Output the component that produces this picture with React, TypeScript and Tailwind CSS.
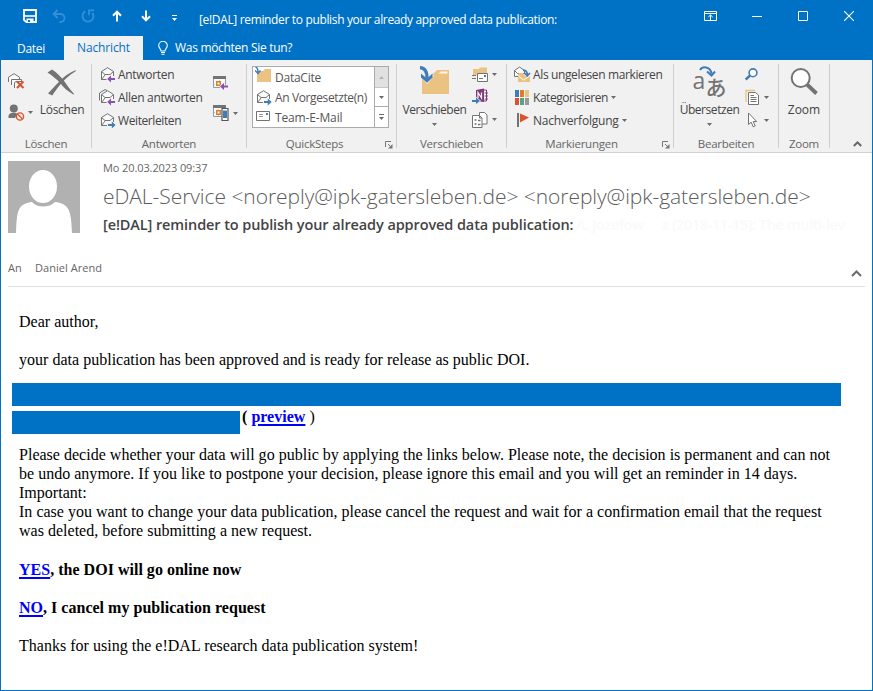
import type { ReactNode } from "react";

const GRAY = "#737373";
const BLUE = "#3f7cba";
const PURPLE = "#8a50ab";
const ORANGE = "#e07c2c";
const RED = "#d9532f";
const TAN = "#eac282";

function Svg({ w, h, children, className = "" }: { w: number; h: number; children: ReactNode; className?: string }) {
  return (
    <svg width={w} height={h} viewBox={`0 0 ${w} ${h}`} fill="none" className={`block shrink-0 ${className}`}>
      {children}
    </svg>
  );
}

function Caret({ className = "", color = "#6b6b6b" }: { className?: string; color?: string }) {
  return (
    <Svg w={5} h={3} className={className}>
      <path d="M0 0h5L2.5 3z" fill={color} />
    </Svg>
  );
}

function Envelope({ stacked = false }: { stacked?: boolean }) {
  return (
    <>
      {stacked && <path d="M.5 11.5V4L6 .6l2 .9" stroke={GRAY} />}
      <path d="M2.5 13.500V5.500L8.500 1.700l6 3.800V10" fill="#fafafa" stroke={GRAY} />
      <path d="M2.500 5.500 6 8.500h5l3.500-3M2.500 13.500 6 9M2.500 13.500H8" stroke={GRAY} />
    </>
  );
}

function ReplyIcon({ all = false }: { all?: boolean }) {
  return (
    <Svg w={17} h={17}>
      <Envelope stacked={all} />
      <path d="M8.200 13 12 9.600V12h4v2h-4v2.400z" fill={PURPLE} stroke="#f1f1f1" strokeWidth="1.600" paintOrder="stroke" />
    </Svg>
  );
}

function ForwardIcon() {
  return (
    <Svg w={17} h={17}>
      <Envelope />
      <path d="M16.600 13 12.800 9.600V12H9v2h3.800v2.400z" fill={BLUE} stroke="#f6f6f6" strokeWidth="1.600" paintOrder="stroke" />
    </Svg>
  );
}

function GroupLauncher({ className = "" }: { className?: string }) {
  return (
    <Svg w={8} h={8} className={className}>
      <path d="M.5 6V.5H6M3 3l3 3" stroke="#777" />
      <path d="M7.500 3v4.500H3z" fill="#777" />
    </Svg>
  );
}

function Group({ width, label, labelClass = "", launcher = false, children }: { width: string; label: string; labelClass?: string; launcher?: boolean; children: ReactNode }) {
  return (
    <div className={`flex h-[84px] shrink-0 flex-col border-r border-[#cfcfcf] ${width}`}>
      <div className="flex h-[70px] shrink-0 items-start">{children}</div>
      <div className="flex h-5 shrink-0 items-center">
        <span className={`flex-1 whitespace-nowrap text-center text-[11.5px] leading-[18px] tracking-[-0.25px] text-[#666] ${labelClass}`}>{label}</span>
        {launcher && <GroupLauncher className="-ml-[11px] mr-[3px] mt-[2px]" />}
      </div>
    </div>
  );
}

function Row({ icon, text, caret = false, tracking }: { icon: ReactNode; text: string; caret?: boolean; tracking: string }) {
  return (
    <div className="flex h-[23px] items-center">
      {icon}
      <span className={`ml-[2px] whitespace-nowrap text-[12px] leading-[18px] text-[#444] ${tracking}`}>{text}</span>
      {caret && <Caret className="ml-[3px]" />}
    </div>
  );
}

function BigLabel({ children, className = "" }: { children: ReactNode; className?: string }) {
  return <span className={`whitespace-nowrap text-[12px] leading-[18px] text-[#444] ${className}`}>{children}</span>;
}

function TitleBar() {
  return (
    <div className="flex h-9 items-start text-white">
      <div className="flex h-8 items-center pl-[22px]">
        <Svg w={14} h={14}>
          <path d="M1 1h12v12H3.500L1 11z" stroke="#fff" strokeWidth="1.800" />
          <path d="M1 7h12" stroke="#fff" strokeWidth="1.600" />
          <path d="M3.500 9.500h7V13h-7z" fill="#fff" />
          <path d="M5 11h2v2H5z" fill="#0072c6" />
        </Svg>
        <Svg w={15} h={14} className="ml-[15px]">
          <path d="M5.500 1 1.500 5l4 4M1.500 5h7a4 4 0 0 1 0 8H7.500" stroke="#3390d6" strokeWidth="1.800" />
        </Svg>
        <Svg w={14} h={14} className="ml-[14px]">
          <path d="M4.200 2.400A5.500 5.500 0 1 0 11.500 4M8 6.200V1.300h5" stroke="#3390d6" strokeWidth="1.800" />
        </Svg>
        <Svg w={10} h={12} className="ml-[17px]">
          <path d="M5 11.500V2M1 5.800 5 1.600l4 4.200" stroke="#fff" strokeWidth="2" />
        </Svg>
        <Svg w={10} h={12} className="ml-[19px]">
          <path d="M5 .5V10M1 6.200l4 4.200 4-4.200" stroke="#fff" strokeWidth="2" />
        </Svg>
        <Svg w={5} h={6} className="ml-[21px] mt-[3px]">
          <path d="M0 .5h5" stroke="#fff" />
          <path d="M0 3h5L2.500 6z" fill="#fff" />
        </Svg>
      </div>
      <span className="ml-[22px] mt-[11px] whitespace-nowrap text-[12px] leading-[18px] tracking-[-0.345px]">
        [e!DAL] reminder to publish your already approved data publication:
      </span>
      <div className="ml-auto flex h-8 items-center pr-[18px]">
        <Svg w={13} h={10}>
          <path d="M.5.5h12v9H.5zM.5 2.500h12M6.500 9V4M4.300 6l2.200-2 2.200 2" stroke="#fff" />
        </Svg>
        <Svg w={10} h={10} className="ml-[35px]">
          <path d="M0 5.500h10" stroke="#fff" />
        </Svg>
        <Svg w={10} h={10} className="ml-9">
          <path d="M.5.5h9v9h-9z" stroke="#fff" />
        </Svg>
        <Svg w={10} h={10} className="ml-9">
          <path d="m0 0 10 10M10 0 0 10" stroke="#fff" strokeWidth="1.100" />
        </Svg>
      </div>
    </div>
  );
}

function Tabs() {
  return (
    <div className="flex h-6 items-center text-[12px] leading-[18px] text-white">
      <span className="w-[63px] pl-4 pt-[2px] tracking-[-0.3px]">Datei</span>
      <span className="flex h-6 w-[79px] items-center justify-center bg-[#f1f1f1] tracking-[-0.15px] text-[#0072c6]">Nachricht</span>
      <Svg w={10} h={14} className="ml-[15px]">
        <path d="M3 10C3 8 .7 7.200.7 4.600a4.300 4.300 0 0 1 8.600 0C9.300 7.200 7 8 7 10zM3 11.500h4M3.500 13.300h3" stroke="#fff" strokeWidth="1.100" />
      </Svg>
      <span className="ml-[7px] tracking-[-0.3px]">Was möchten Sie tun?</span>
    </div>
  );
}

function QuickStep({ icon, text, className = "" }: { icon: ReactNode; text: string; className?: string }) {
  return (
    <div className="flex h-5 items-center gap-[4px] pl-[2px]">
      {icon}
      <span className={`mt-[2px] whitespace-nowrap text-[12px] leading-5 text-[#555] ${className}`}>{text}</span>
    </div>
  );
}

function Ribbon() {
  return (
    <div className="flex h-[93px] border-b border-[#d0d0d0] bg-[#f1f1f1] pt-1">
      <Group width="w-[91px]" label="Löschen">
        <div className="flex w-[37px] flex-col pl-[7px] pt-[9px]">
          <Svg w={17} h={17}>
            <path d="M.5 9V4.200L6 .7l5.500 3.500V6" fill="#fafafa" stroke={GRAY} />
            <path d="M3.500 12V6.500h10V9M6.500 15V9.500L8 8.500h6" fill="#fafafa" stroke={GRAY} />
            <path d="m9 8.500 6.500 6.500M15.500 8.500 9 15" stroke={RED} strokeWidth="2" />
          </Svg>
          <div className="mt-[14px] flex items-center">
            <Svg w={17} h={17}>
              <circle cx="5.800" cy="4.500" r="4" fill={GRAY} />
              <path d="M.5 14V12c0-2 1.800-3.300 5-3.300 2 0 3 .5 4 1L7 14z" fill={GRAY} />
              <circle cx="12" cy="12.500" r="3.600" fill="#f1f1f1" stroke={RED} strokeWidth="1.400" />
              <path d="m9.500 10 5 5" stroke={RED} strokeWidth="1.300" />
            </Svg>
            <Caret className="ml-[3px]" />
          </div>
        </div>
        <div className="flex w-[48px] flex-col items-center pt-[5px]">
          <Svg w={30} h={27}>
            <path d="M.5 3.500 5 .6c5 3 9 7.500 12.300 11.700 2.800 4 5.300 7.700 9.800 12.700l-.8.5c-6-3.500-9.700-7-13.200-11.500C9.500 10 5 6.500.5 3.500z" fill={GRAY} />
            <path d="M28.500 1.200 29 2C21 6.500 15 13 10.500 19c-2 2.700-3.500 5-5.200 7.400L1 24.500C7 18 11 13.500 16 9c4-3.500 8-6.200 12.500-7.800z" fill={GRAY} />
          </Svg>
          <BigLabel className="mt-[5px] tracking-[-0.25px]">Löschen</BigLabel>
        </div>
      </Group>

      <Group width="w-[155px]" label="Antworten">
        <div className="-mt-px flex w-[119px] flex-col pl-[7px]">
          <Row icon={<ReplyIcon />} text="Antworten" tracking="tracking-[-0.3px]" />
          <Row icon={<ReplyIcon all />} text="Allen antworten" tracking="tracking-[-0.3px]" />
          <Row icon={<ForwardIcon />} text="Weiterleiten" tracking="tracking-[-0.4px]" />
        </div>
        <div className="flex flex-col pl-[2px] pt-3">
          <Svg w={16} h={15}>
            <path d="M.5.5h12v11H.5z" fill="#fafafa" stroke="#999" />
            <path d="M0 0h13v3H0z" fill={GRAY} />
            <path d="M1 8.500h10M6.500 4v7" stroke="#ccc" strokeDasharray="1 1" />
            <path d="M3.750 5.750h3.500v3.500h-3.500z" fill="#fff" stroke={ORANGE} strokeWidth="1.500" />
            <path d="M7 10.500 11 7v2.500h4v2h-4V14z" fill={PURPLE} stroke="#f1f1f1" strokeWidth="1.600" paintOrder="stroke" />
          </Svg>
          <div className="mt-[14px] flex items-center">
            <Svg w={16} h={16}>
              <path d="M.5.5h12v11H.5z" fill="#fafafa" stroke="#999" />
              <path d="M0 0h13v3H0z" fill={GRAY} />
              <path d="M1 7.500h7M5.500 4v7" stroke="#ccc" strokeDasharray="1 1" />
              <path d="M3.750 5.750h3.500v3.500h-3.500z" fill="#fff" stroke={ORANGE} strokeWidth="1.500" />
              <path d="M9 3.500h6v12H9z" fill="#fff" stroke="#555" strokeWidth="1.200" />
              <path d="M10 5.500h4V13h-4z" fill={BLUE} />
            </Svg>
            <Caret className="ml-1" />
          </div>
        </div>
      </Group>

      <Group width="w-[150px]" label="QuickSteps" labelClass="pr-[14px]" launcher>
        <div className="ml-[5px] mt-[2px] flex h-[62px] w-[137px] border border-[#ababab] bg-white">
          <div className="flex-1">
            <QuickStep
              text="DataCite"
              className="tracking-[-0.25px]"
              icon={
                <Svg w={16} h={16} className="-mt-[5px]">
                  <path d="M2 4h6l2-2h6v13H2z" fill={TAN} />
                  <path d="M.5 0c2 .5 2.500 2 2.500 5M0 3.500l3 3 2.500-3" stroke={BLUE} strokeWidth="1.500" />
                </Svg>
              }
            />
            <QuickStep text="An Vorgesetzte(n)" className="-ml-px tracking-[-0.38px]" icon={<ForwardIcon />} />
            <QuickStep
              text="Team-E-Mail"
              className="tracking-[-0.15px]"
              icon={
                <Svg w={15} h={10} className="-mt-[3px] ml-px">
                  <path d="M.5.5h13v9H.5z" fill="#fff" stroke={GRAY} />
                  <path d="M3 3.500h4M3 5.500h4" stroke="#999" />
                  <path d="M10 2h2v2h-2z" fill={BLUE} />
                </Svg>
              }
            />
          </div>
          <div className="flex w-[14px] flex-col border-l border-[#ababab]">
            <div className="flex h-[21px] items-center justify-center border-b border-[#c6c6c6] bg-[#e1e1e1]">
              <Caret className="rotate-180" color="#b5b5b5" />
            </div>
            <div className="flex h-[19px] items-center justify-center border-b border-[#ababab]">
              <Caret />
            </div>
            <div className="flex h-5 flex-col items-center justify-center gap-[2px]">
              <span className="h-px w-[5px] bg-[#6b6b6b]" />
              <Caret />
            </div>
          </div>
        </div>
      </Group>

      <Group width="w-[110px]" label="Verschieben">
        <div className="flex w-[75px] flex-col items-center pt-[2px]">
          <Svg w={31} h={29}>
            <path d="M3 8h11l4-4h12v24H3z" fill={TAN} />
            <path d="M19.500 7.500 22 5.500h6.500v2z" fill="#fff8e8" />
            <path d="M1.500 1.500C7 2 9 5.500 8.200 13M2 8l6 6.200L13 8" stroke="#f1f1f1" strokeWidth="5" />
            <path d="M1 1.700c5.500.3 7.200 4 7 11" stroke={BLUE} strokeWidth="3.200" />
            <path d="M2 7.500v4l6 5.200 5.500-5.200v-4L8 12.500z" fill={BLUE} />
          </Svg>
          <BigLabel className="mt-[5px] translate-y-px tracking-[-0.45px]">Verschieben</BigLabel>
          <Caret className="mt-[5px]" />
        </div>
        <div className="flex flex-col">
          <div className="flex h-[21px] items-center">
            <Svg w={16} h={16}>
              <path d="M1 2h6l1-1.500h7V8H1z" fill={TAN} />
              <path d="M5.500 6.500h10v8h-10z" fill="#fff" stroke={GRAY} />
              <path d="M0 8.500h4M0 11.500h4M7 11.500h4" stroke={GRAY} />
              <path d="M12 8h2v2h-2z" fill={BLUE} />
            </Svg>
            <Caret className="ml-1" />
          </div>
          <Svg w={17} h={16} className="mt-[3px]">
            <path d="M8 2h6.500v11H8z" fill="#fff" stroke="#80397b" />
            <path d="M12.500 5H16M12.500 8H16M12.500 11H16" stroke="#80397b" />
            <path d="m4 2 8-1.500V14l-8-1.500z" fill="#80397b" />
            <path d="M6 10V4.500l3.500 5.500V4.500" stroke="#fff" strokeWidth="1.200" />
            <path d="M0 12h4V9.500L8 13l-4 3v-2H0z" fill={BLUE} stroke="#f1f1f1" strokeWidth="1.400" paintOrder="stroke" />
          </Svg>
          <div className="mt-1 flex h-[23px] items-center">
            <Svg w={16} h={16}>
              <path d="M7.500 3V.5h5l2.500 2.500v9H9" fill="#fff" stroke={GRAY} />
              <path d="M.5 3.500h7L10 6v9.500H.5zM7.500 3.500V6H10" fill="#fff" stroke={GRAY} />
              <path d="M2.500 8h2M2.500 12h2M6 8.500h2.500M6 12.500h2.500" stroke={GRAY} strokeWidth="1.500" />
            </Svg>
            <Caret className="ml-1" />
          </div>
        </div>
      </Group>

      <Group width="w-[167px]" label="Markierungen" labelClass="pr-[17px]" launcher>
        <div className="-mt-px flex flex-col pl-[7px]">
          <Row
            text="Als ungelesen markieren"
            tracking="tracking-[-0.37px]"
            icon={
              <Svg w={17} h={17}>
                <path d="M.5 10.500V4.500L5.500 1l5 3.500v3H6M.5 4.500l3 3H6M.5 10.500H4" fill="#fafafa" stroke={GRAY} />
                <path d="M4 8l1-1h4l2 3h5v6H4z" fill={TAN} />
                <path d="m4.500 10 5 4 6-4" stroke="#fff" />
                <path d="M9 4.500c3-.5 4.300 1 4.300 4.500M10.500 7l2.800 2.800L16 7" stroke={BLUE} strokeWidth="1.700" />
              </Svg>
            }
          />
          <Row
            text="Kategorisieren"
            caret
            tracking="tracking-[-0.45px]"
            icon={
              <Svg w={17} h={17}>
                <path d="M1 1h4v7H1z" fill={BLUE} />
                <path d="M6 1h4v7H6z" fill={ORANGE} />
                <path d="M11 1h4v7h-4z" fill={TAN} />
                <path d="M1 9h4v7H1z" fill={RED} />
                <path d="M6 9h4v7H6z" fill="#58a28b" />
                <path d="M11 9h4v7h-4z" fill="#999" />
              </Svg>
            }
          />
          <Row
            text="Nachverfolgung"
            caret
            tracking="tracking-[-0.2px]"
            icon={
              <Svg w={17} h={17}>
                <path d="M3 1h2v14H3z" fill={GRAY} />
                <path d="m6 1.500 9 4-9 5z" fill={RED} />
              </Svg>
            }
          />
        </div>
      </Group>

      <Group width="w-[105px]" label="Bearbeiten">
        <div className="flex w-[71px] flex-col items-center pt-[2px]">
          <div className="relative h-8 w-8 text-[#737373]">
            <span className="absolute -left-[1px] top-[2px] text-[23px] font-medium leading-[24px]">a</span>
            <span className="absolute left-[12px] top-[8px] font-['Noto_Sans_CJK_JP',sans-serif] text-[21px] font-medium leading-[24px]">あ</span>
            <Svg w={17} h={12} className="absolute left-[5px] top-0">
              <path d="M1 4c2-3.500 10-4.500 11.500 3.500M8 5.500l4.500 4L16 5.500" stroke={BLUE} strokeWidth="2" />
            </Svg>
          </div>
          <BigLabel className="mt-[2px] translate-y-px tracking-[-0.45px]">Übersetzen</BigLabel>
          <Caret className="mt-[5px]" />
        </div>
        <div className="flex flex-col">
          <Svg w={13} h={13} className="mt-1">
            <circle cx="8" cy="4.800" r="3.900" fill="#fff" stroke={BLUE} strokeWidth="1.600" />
            <path d="m5 7.500-4.300 4" stroke={BLUE} strokeWidth="2.400" />
          </Svg>
          <div className="mt-2 flex h-4 items-center">
            <Svg w={15} h={16}>
              <path d="M1 13V1.500h9" stroke={TAN} strokeWidth="1.300" />
              <path d="M3.500 3.500h7L13.500 6v9.500h-10z" fill="#fff" stroke={GRAY} />
              <path d="M5.500 6.500H9M5.500 8.500h6M5.500 10.500h6M5.500 12.500h6" stroke={GRAY} />
            </Svg>
            <Caret className="ml-[4px]" />
          </div>
          <div className="mt-[7px] flex h-4 items-center">
            <Svg w={15} h={16}>
              <path d="M3.500 1v11.500l2.700-2.300 2 4.600 2-.9-2-4.400h3.500z" fill="#fff" stroke={GRAY} />
            </Svg>
            <Caret className="ml-[4px]" />
          </div>
        </div>
      </Group>

      <Group width="w-[51px]" label="Zoom">
        <div className="flex w-[50px] flex-col items-center pt-1">
          <Svg w={28} h={28}>
            <path d="m17 16.500 9.500 9" stroke={GRAY} strokeWidth="3.800" />
            <circle cx="10.700" cy="10" r="9" fill="#fff" stroke={GRAY} strokeWidth="2" />
          </Svg>
          <BigLabel className="mt-[5px]">Zoom</BigLabel>
        </div>
      </Group>
      <Svg w={9} h={6} className="ml-[23px] mt-[77px]">
        <path d="m.8 5 3.700-3.600L8.200 5" stroke="#666" strokeWidth="2" />
      </Svg>
    </div>
  );
}

function MessageHeader() {
  return (
    <div className="mx-[7px] h-[134px] border-b border-[#e1e1e1]">
      <div className="flex h-[104px] pt-2">
        <Svg w={72} h={72}>
          <path d="M0 0h72v72H0z" fill="#b1b1b1" />
          <ellipse cx="35" cy="25.500" rx="14" ry="16.500" fill="#fff" />
          <path d="M8 72c.5-11 .5-18 3-23.500C13 44 18 41.500 24 41c5 6 17 6 23 0 6 .5 11.500 3 13.500 7.500C63 54 63.500 61 64 72z" fill="#fff" />
        </Svg>
        <div className="ml-[23px] flex flex-col whitespace-nowrap">
          <span className="-mt-px text-[11px] leading-4 tracking-[-0.1px] text-[#666]">Mo 20.03.2023 09:37</span>
          <span className="mt-[5px] text-[21px] font-light leading-[30px] tracking-[-0.05px] text-[#5c5c5c]">
            {"eDAL-Service <noreply@ipk-gatersleben.de> <noreply@ipk-gatersleben.de>"}
          </span>
          <span className="mt-[4px] flex text-[14.5px] font-semibold leading-5 text-[#444]">
            <span className="w-[473px] tracking-[-0.1px]">[e!DAL] reminder to publish your already approved data publication:</span>
            <span className="w-[86px] tracking-[-0.4px] text-[#fafafa]">A. Jozefow</span>
            <span className="tracking-[-0.4px] text-[#fafafa]">z (2018-11-15): The multi-lev</span>
          </span>
        </div>
      </div>
      <div className="flex items-center text-[11px] leading-[22px] tracking-[0.05px] text-[#666]">
        <span className="w-[27px]">An</span>
        <span>Daniel Arend</span>
        <Svg w={11} h={7} className="ml-auto mr-[3px] mt-[11px]">
          <path d="m1 6 4.500-4.500L10 6" stroke="#6b6b6b" strokeWidth="2" />
        </Svg>
      </div>
    </div>
  );
}

function Link({ children }: { children: ReactNode }) {
  return <a className="text-[#0000ff] underline decoration-2 underline-offset-2">{children}</a>;
}

function MessageBody() {
  return (
    <div className="whitespace-nowrap pl-[18px] pt-[25px] font-['Liberation_Serif',serif] text-[16px] leading-[19px] tracking-[0.016px] text-black">
      <p>Dear author,</p>
      <p className="mt-[19px]">your data publication has been approved and is ready for release as public DOI.</p>
      <div className="-ml-[7px] mt-[14px] h-[23px] w-[829px] bg-[#0072c6]" />
      <div className="-ml-[7px] mt-[5px] flex h-[23px]">
        <div className="h-[23px] w-[228px] bg-[#0072c6]" />
        <p className="-mt-1 ml-[2px]">
          <b>( <Link>preview</Link></b> )
        </p>
      </div>
      <p className="mt-[11px]">
        Please decide whether your data will go public by applying the links below. Please note, the decision is permanent and can not
        <br />
        be undo anymore. If you like to postpone your decision, please ignore this email and you will get an reminder in 14 days.
        <br />
        Important:
        <br />
        In case you want to change your data publication, please cancel the request and wait for a confirmation email that the request
        <br />
        was deleted, before submitting a new request.
      </p>
      <p className="mt-5 font-bold"><Link>YES</Link>, the DOI will go online now</p>
      <p className="mt-[19px] font-bold"><Link>NO</Link>, I cancel my publication request</p>
      <p className="mt-[19px]">Thanks for using the e!DAL research data publication system!</p>
    </div>
  );
}

export default function App() {
  return (
    <div className="h-[691px] w-[873px] overflow-hidden border-x border-b border-[#0072c6] bg-white font-['Open_Sans','Noto_Sans',sans-serif]">
      <div className="bg-[#0072c6]">
        <TitleBar />
        <Tabs />
      </div>
      <Ribbon />
      <MessageHeader />
      <MessageBody />
    </div>
  );
}
